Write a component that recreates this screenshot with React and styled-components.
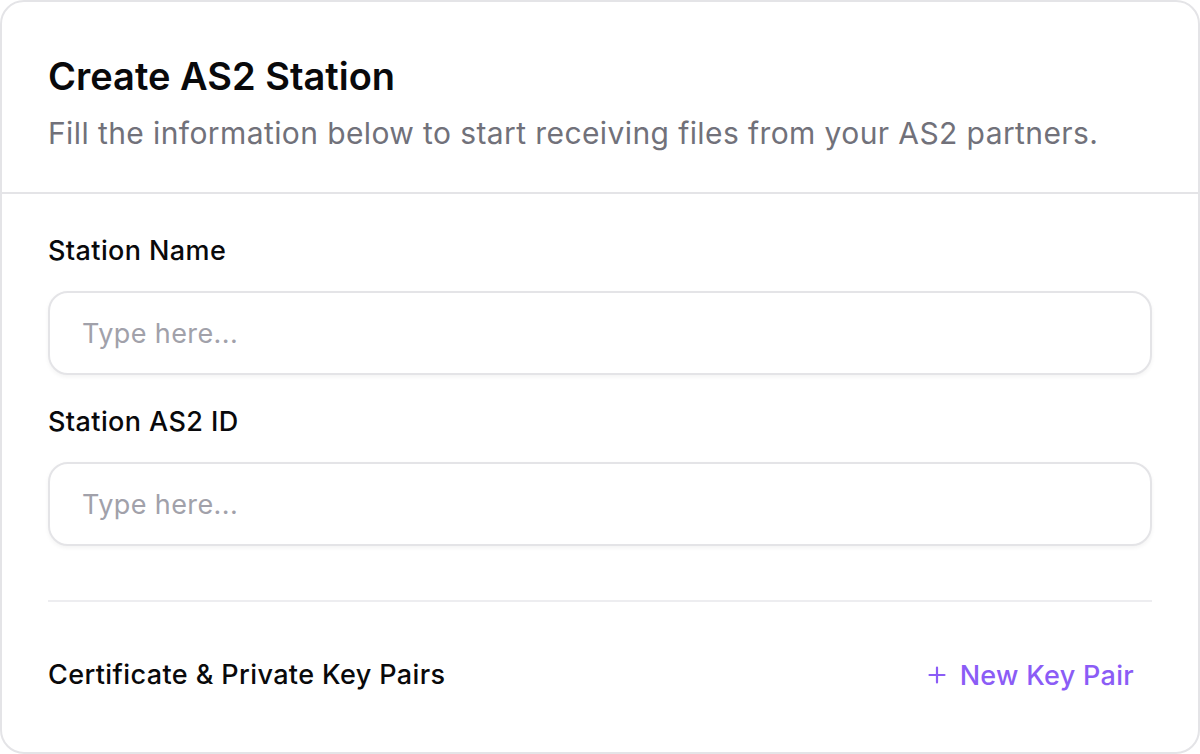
import React from "react";
import styled, { createGlobalStyle } from "styled-components";

const GlobalStyle = createGlobalStyle`
    html, body {
        margin: 0;
        padding: 0;
        background: #ffffff;
    }
    body {
        font-family: Inter, "Noto Sans", "Liberation Sans", sans-serif;
        -webkit-font-smoothing: antialiased;
    }
    * {
        box-sizing: border-box;
    }
`;

const Card = styled.div`
    width: 1200px;
    height: 754px;
    border: 2px solid #e4e4e7;
    border-radius: 24px;
    background: #ffffff;
    display: flex;
    flex-direction: column;
    overflow: hidden;
`;

const Header = styled.div`
    padding: 52px 46px 39px;
    border-bottom: 2px solid #e4e4e7;
    display: flex;
    flex-direction: column;
    gap: 15px;
`;

const Title = styled.h1`
    margin: 0;
    font-size: 38px;
    line-height: 44px;
    font-weight: 600;
    color: #09090b;
`;

const Subtitle = styled.p`
    margin: 0;
    font-size: 30px;
    line-height: 40px;
    letter-spacing: 0.4px;
    color: #71717a;
`;

const Body = styled.div`
    padding: 37px 46px 0;
    display: flex;
    flex-direction: column;
`;

const Field = styled.div`
    display: flex;
    flex-direction: column;
    gap: 20px;
    margin-bottom: 27px;
`;

const Label = styled.label`
    font-size: 27px;
    line-height: 40px;
    letter-spacing: 0.4px;
    font-weight: 500;
    color: #09090b;
`;

const TextInput = styled.input`
    height: 84px;
    width: 100%;
    border: 2px solid #e4e4e7;
    border-radius: 20px;
    padding: 0 32px;
    font-family: inherit;
    font-size: 27px;
    letter-spacing: 0.4px;
    color: #09090b;
    background: #ffffff;
    box-shadow: 0 2px 4px rgba(9, 9, 11, 0.05);
    outline: none;

    &::placeholder {
        color: #a1a1aa;
    }
`;

const Divider = styled.hr`
    margin: 27px 0 0;
    border: none;
    border-top: 2px solid #ededf0;
`;

const Footer = styled.div`
    display: flex;
    align-items: center;
    justify-content: space-between;
    height: 146px;
`;

const SectionLabel = styled.div`
    font-size: 27px;
    line-height: 40px;
    letter-spacing: 0.4px;
    font-weight: 500;
    color: #09090b;
`;

const GhostButton = styled.button`
    display: flex;
    align-items: center;
    gap: 14px;
    height: 64px;
    padding: 0 18px;
    border: none;
    border-radius: 16px;
    background: transparent;
    font-family: inherit;
    font-size: 27px;
    letter-spacing: 0.3px;
    font-weight: 500;
    color: #8b5cf6;
    cursor: pointer;
`;

const PlusIcon = () => (
    <svg width="18" height="18" viewBox="0 0 18 18" fill="none">
        <path d="M9 1.5v15M1.5 9h15" stroke="#8b5cf6" strokeWidth="2.2" strokeLinecap="round" />
    </svg>
);

export default function App() {
    return (
        <>
            <GlobalStyle />
            <Card>
                <Header>
                    <Title>Create AS2 Station</Title>
                    <Subtitle>
                        Fill the information below to start receiving files from your AS2 partners.
                    </Subtitle>
                </Header>
                <Body>
                    <Field>
                        <Label>Station Name</Label>
                        <TextInput placeholder="Type here..." />
                    </Field>
                    <Field>
                        <Label>Station AS2 ID</Label>
                        <TextInput placeholder="Type here..." />
                    </Field>
                    <Divider />
                    <Footer>
                        <SectionLabel>Certificate &amp; Private Key Pairs</SectionLabel>
                        <GhostButton>
                            <PlusIcon />
                            New Key Pair
                        </GhostButton>
                    </Footer>
                </Body>
            </Card>
        </>
    );
}
